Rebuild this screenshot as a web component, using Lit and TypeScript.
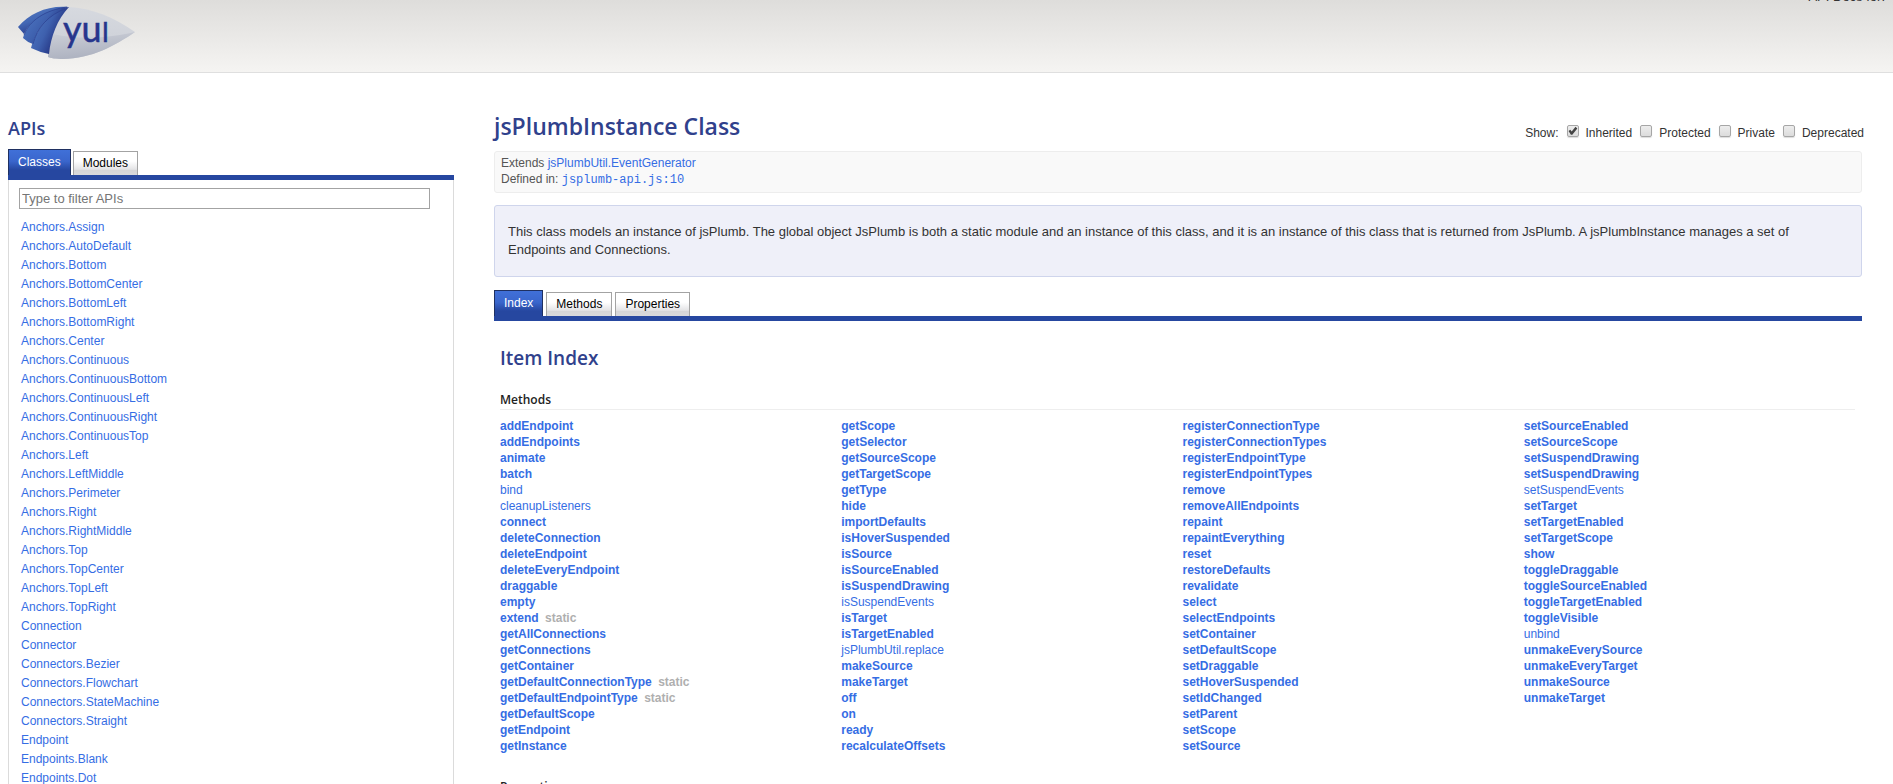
import { LitElement, html, css } from "lit";
import { customElement, state } from "lit/decorators.js";

const CLASSES = `Anchors.Assign Anchors.AutoDefault Anchors.Bottom Anchors.BottomCenter Anchors.BottomLeft
Anchors.BottomRight Anchors.Center Anchors.Continuous Anchors.ContinuousBottom Anchors.ContinuousLeft
Anchors.ContinuousRight Anchors.ContinuousTop Anchors.Left Anchors.LeftMiddle Anchors.Perimeter Anchors.Right
Anchors.RightMiddle Anchors.Top Anchors.TopCenter Anchors.TopLeft Anchors.TopRight Connection Connector
Connectors.Bezier Connectors.Flowchart Connectors.StateMachine Connectors.Straight Endpoint Endpoints.Blank
Endpoints.Dot`.split(/\s+/);

// A leading "~" marks an inherited method, a trailing "*" a static one.
const METHODS = `addEndpoint addEndpoints animate batch ~bind ~cleanupListeners connect deleteConnection
deleteEndpoint deleteEveryEndpoint draggable empty extend* getAllConnections getConnections getContainer
getDefaultConnectionType* getDefaultEndpointType* getDefaultScope getEndpoint getInstance
getScope getSelector getSourceScope getTargetScope getType hide importDefaults isHoverSuspended isSource
isSourceEnabled isSuspendDrawing ~isSuspendEvents isTarget isTargetEnabled ~jsPlumbUtil.replace makeSource
makeTarget off on ready recalculateOffsets
registerConnectionType registerConnectionTypes registerEndpointType registerEndpointTypes remove
removeAllEndpoints repaint repaintEverything reset restoreDefaults revalidate select selectEndpoints
setContainer setDefaultScope setDraggable setHoverSuspended setIdChanged setParent setScope setSource
setSourceEnabled setSourceScope setSuspendDrawing setSuspendDrawing ~setSuspendEvents setTarget
setTargetEnabled setTargetScope show toggleDraggable toggleSourceEnabled toggleTargetEnabled toggleVisible
~unbind unmakeEverySource unmakeEveryTarget unmakeSource unmakeTarget`
  .split(/\s+/)
  .map((raw) => ({
    name: raw.replace(/[~*]/g, ""),
    inherited: raw.startsWith("~"),
    isStatic: raw.endsWith("*"),
  }));

const SHOW = ["Inherited", "Protected", "Private", "Deprecated"];

@customElement("app-root")
export class AppRoot extends LitElement {
  @state() private filter = "";

  static styles = css`
    :host {
      display: block;
      height: 100vh;
      overflow: hidden;
      background: #fff;
      color: #333;
      font: 13px/18px "Liberation Sans", Arial, sans-serif;
    }
    a { color: #356de4; text-decoration: none; }
    h1, h2, h3 {
      margin: 0;
      color: #30418c;
      font-family: "Trebuchet MS", "Open Sans", sans-serif;
      font-weight: 600;
    }
    ul { list-style: none; margin: 0; padding: 0; }

    .header {
      position: relative;
      box-sizing: border-box;
      height: 73px;
      padding: 6px 0 0 17px;
      border-bottom: 1px solid #dfdfdf;
      background: linear-gradient(#dedddb, #f5f4f2);
    }
    .logo { display: block; }
    .logo-text {
      font-family: Lato, sans-serif;
      font-size: 36px;
      fill: #26358c;
      stroke: #26358c;
      stroke-width: 0.5px;
    }
    .logo-cap { font-size: 26px; }
    .docs-for {
      position: absolute;
      right: 8px;
      top: -12px;
      font-size: 13px;
      line-height: 18px;
    }

    .page {
      display: grid;
      grid-template-columns: minmax(0, 446fr) minmax(0, 1368fr);
      column-gap: 40px;
      padding: 37px 31px 0 8px;
    }
    .title { font-size: 18px; line-height: 36px; }
    .sidebar .tabs { margin-top: 3px; }

    .tabs {
      display: flex;
      align-items: flex-end;
      gap: 2px;
      border-bottom: 5px solid #2647a0;
    }
    .main .tabs { gap: 3px; margin-top: 13px; }
    .tab {
      box-sizing: border-box;
      height: 24px;
      margin: 0;
      padding: 0 9px 1px;
      border: 1px solid #a3a3a3;
      border-bottom: 0;
      border-radius: 0;
      background: linear-gradient(#fff 40%, #e4e4e6 75%, #d5d5d7 80%, #d9d9db);
      color: #000;
      font: 12px/22px "Liberation Sans", Arial, sans-serif;
    }
    .tab-on {
      height: 26px;
      border-color: #1f3061;
      background: linear-gradient(#4070d8, #3a66cc 45%, #2647a0 80%, #2647a0);
      color: #fff;
    }

    .panel {
      padding: 8px 10px 0;
      border: 1px solid #dbdbdb;
      border-width: 0 1px;
    }
    .filter {
      display: block;
      box-sizing: border-box;
      width: calc(100% - 13px);
      height: 21px;
      padding: 0 2px;
      border: 1px solid #a3a3a3;
      border-radius: 0;
      font: 13px/18px "Liberation Sans", Arial, sans-serif;
    }
    .filter::placeholder { color: #757575; }
    .classes { padding: 9px 0 0 2px; font-size: 12px; line-height: 19px; }

    .head {
      display: flex;
      justify-content: space-between;
      align-items: flex-end;
      height: 41px;
      margin-right: -2px;
    }
    .name { font-size: 23px; line-height: 32px; padding-bottom: 9px; }
    .show {
      display: flex;
      align-items: center;
      font-size: 12px;
      line-height: 16px;
      padding-bottom: 10px;
    }
    .option { display: flex; align-items: center; margin-left: 8px; gap: 7px; }
    .check {
      appearance: none;
      box-sizing: border-box;
      width: 12px;
      height: 12px;
      margin: 0 0 4px;
      border: 1px solid #a6a6a6;
      border-radius: 2px;
      background: linear-gradient(#ededed, #dcdcdc);
      box-shadow: 0 1px 1px #ddd;
    }
    .check:checked::before {
      content: "";
      display: block;
      height: 10px;
      background: #444;
      clip-path: polygon(10% 50%, 28% 38%, 42% 54%, 80% 8%, 98% 24%, 48% 88%, 34% 88%);
    }

    .meta {
      padding: 3px 6px 4px;
      border: 1px solid #ededed;
      border-radius: 3px;
      background: #f9f9f9;
      color: #555;
      font-size: 12px;
      line-height: 16px;
    }
    .code { font: 12px/16px "Liberation Mono", "Courier New", monospace; }
    .description {
      margin-top: 12px;
      padding: 17px 13px;
      border: 1px solid #cfd5ec;
      border-radius: 3px;
      background: #eff0f9;
    }
    .description p { margin: 0; }

    .index { padding: 24px 7px 0 6px; }
    .subtitle { font-size: 19px; line-height: 26px; }
    .group {
      margin-top: 20px;
      border-bottom: 1px solid #eee;
      color: #222;
      font-size: 12px;
      line-height: 18px;
    }
    .methods {
      columns: 4;
      column-gap: 10px;
      padding: 8px 0 4px;
      font-size: 12px;
      line-height: 16px;
    }
    .own { font-weight: bold; }
    .flag { margin-left: 3px; color: #afafaf; }
  `;

  private tabs(names: string[]) {
    return html`<div class="tabs" role="tablist">
      ${names.map(
        (name, i) => html`<button
          class="tab ${i === 0 ? "tab-on" : ""}"
          role="tab"
          aria-selected=${i === 0 ? "true" : "false"}
        >${name}</button>`
      )}
    </div>`;
  }

  private logo() {
    return html`<svg class="logo" width="120" height="54" viewBox="17 6 120 54" role="img" aria-label="YUI">
      <defs>
        <linearGradient id="blade" x1="0" y1="0" x2="0.6" y2="1">
          <stop offset="0" stop-color="#5278c0" />
          <stop offset="0.5" stop-color="#4367b4" />
          <stop offset="1" stop-color="#202f80" />
        </linearGradient>
        <linearGradient id="fold" x1="0.1" y1="0.3" x2="0.8" y2="0.7">
          <stop offset="0" stop-color="#4a72be" />
          <stop offset="0.45" stop-color="#3e60ae" />
          <stop offset="1" stop-color="#1e2a78" />
        </linearGradient>
        <linearGradient id="silver" x1="0" y1="0" x2="0" y2="1">
          <stop offset="0" stop-color="#d6d9df" />
          <stop offset="1" stop-color="#cbced6" />
        </linearGradient>
        <linearGradient id="shade" x1="0" y1="0" x2="0.3" y2="1">
          <stop offset="0" stop-color="#cdd0d8" />
          <stop offset="1" stop-color="#adb2c0" />
        </linearGradient>
      </defs>
      <path fill="url(#silver)" d="M69 7C91 8 114 17 135 32C116 45 91 59 63 59C56 59 50 58 48 57C49 38 56 20 69 7Z" />
      <path fill="url(#shade)" d="M53 34C80 40 110 38 135 32C116 45 91 59 63 59C56 59 50 58 48 57C49 49 50 42 53 34Z" />
      <path fill="url(#blade)" d="M18 27C30 13 48 5 69 7C45 11 30 20 24 34Z" />
      <path fill="url(#fold)" d="M23 38C28 20 45 9 69 7C50 15 37 28 33 44Q27 42 23 38Z" />
      <path fill="url(#fold)" d="M31 48C36 30 48 14 69 7C57 20 51 36 49 54Q39 52 31 48Z" />
      <path fill="none" stroke="#26388a" stroke-opacity="0.6" d="M24 35C29 21 45 10 67 7M33 44C37 28 48 15 67 8" />
      <text class="logo-text" x="63" y="42">yu<tspan class="logo-cap">I</tspan></text>
    </svg>`;
  }

  render() {
    const needle = this.filter.toLowerCase();
    return html`
      <header class="header">
        ${this.logo()}
        <span class="docs-for">API Docs for:</span>
      </header>
      <div class="page">
        <aside class="sidebar">
          <h2 class="title">APIs</h2>
          ${this.tabs(["Classes", "Modules"])}
          <div class="panel">
            <input
              class="filter"
              type="search"
              placeholder="Type to filter APIs"
              aria-label="Type to filter APIs"
              @input=${(e: Event) => (this.filter = (e.target as HTMLInputElement).value)}
            />
            <ul class="classes">
              ${CLASSES.filter((c) => c.toLowerCase().includes(needle)).map(
                (c) => html`<li><a href="#${c}">${c}</a></li>`
              )}
            </ul>
          </div>
        </aside>
        <main class="main">
          <div class="head">
            <h1 class="name">jsPlumbInstance Class</h1>
            <div class="show">
              Show:
              ${SHOW.map(
                (label, i) => html`<label class="option"
                  ><input class="check" type="checkbox" ?checked=${i === 0} />${label}</label
                >`
              )}
            </div>
          </div>
          <div class="meta">
            <div>Extends <a href="#EventGenerator">jsPlumbUtil.EventGenerator</a></div>
            <div>Defined in: <a class="code" href="#source">jsplumb-api.js:10</a></div>
          </div>
          <div class="description">
            <p>
              This class models an instance of jsPlumb. The global object JsPlumb is both a static module and an
              instance of this class, and it is an instance of this class that is returned from JsPlumb. A
              jsPlumbInstance manages a set of Endpoints and Connections.
            </p>
          </div>
          ${this.tabs(["Index", "Methods", "Properties"])}
          <section class="index">
            <h2 class="subtitle">Item Index</h2>
            <h3 class="group">Methods</h3>
            <ul class="methods">
              ${METHODS.map(
                (m) => html`<li class=${m.inherited ? "" : "own"}>
                  <a href="#method_${m.name}">${m.name}</a>
                  ${m.isStatic ? html`<span class="flag">static</span>` : ""}
                </li>`
              )}
            </ul>
            <h3 class="group">Properties</h3>
          </section>
        </main>
      </div>
    `;
  }
}
